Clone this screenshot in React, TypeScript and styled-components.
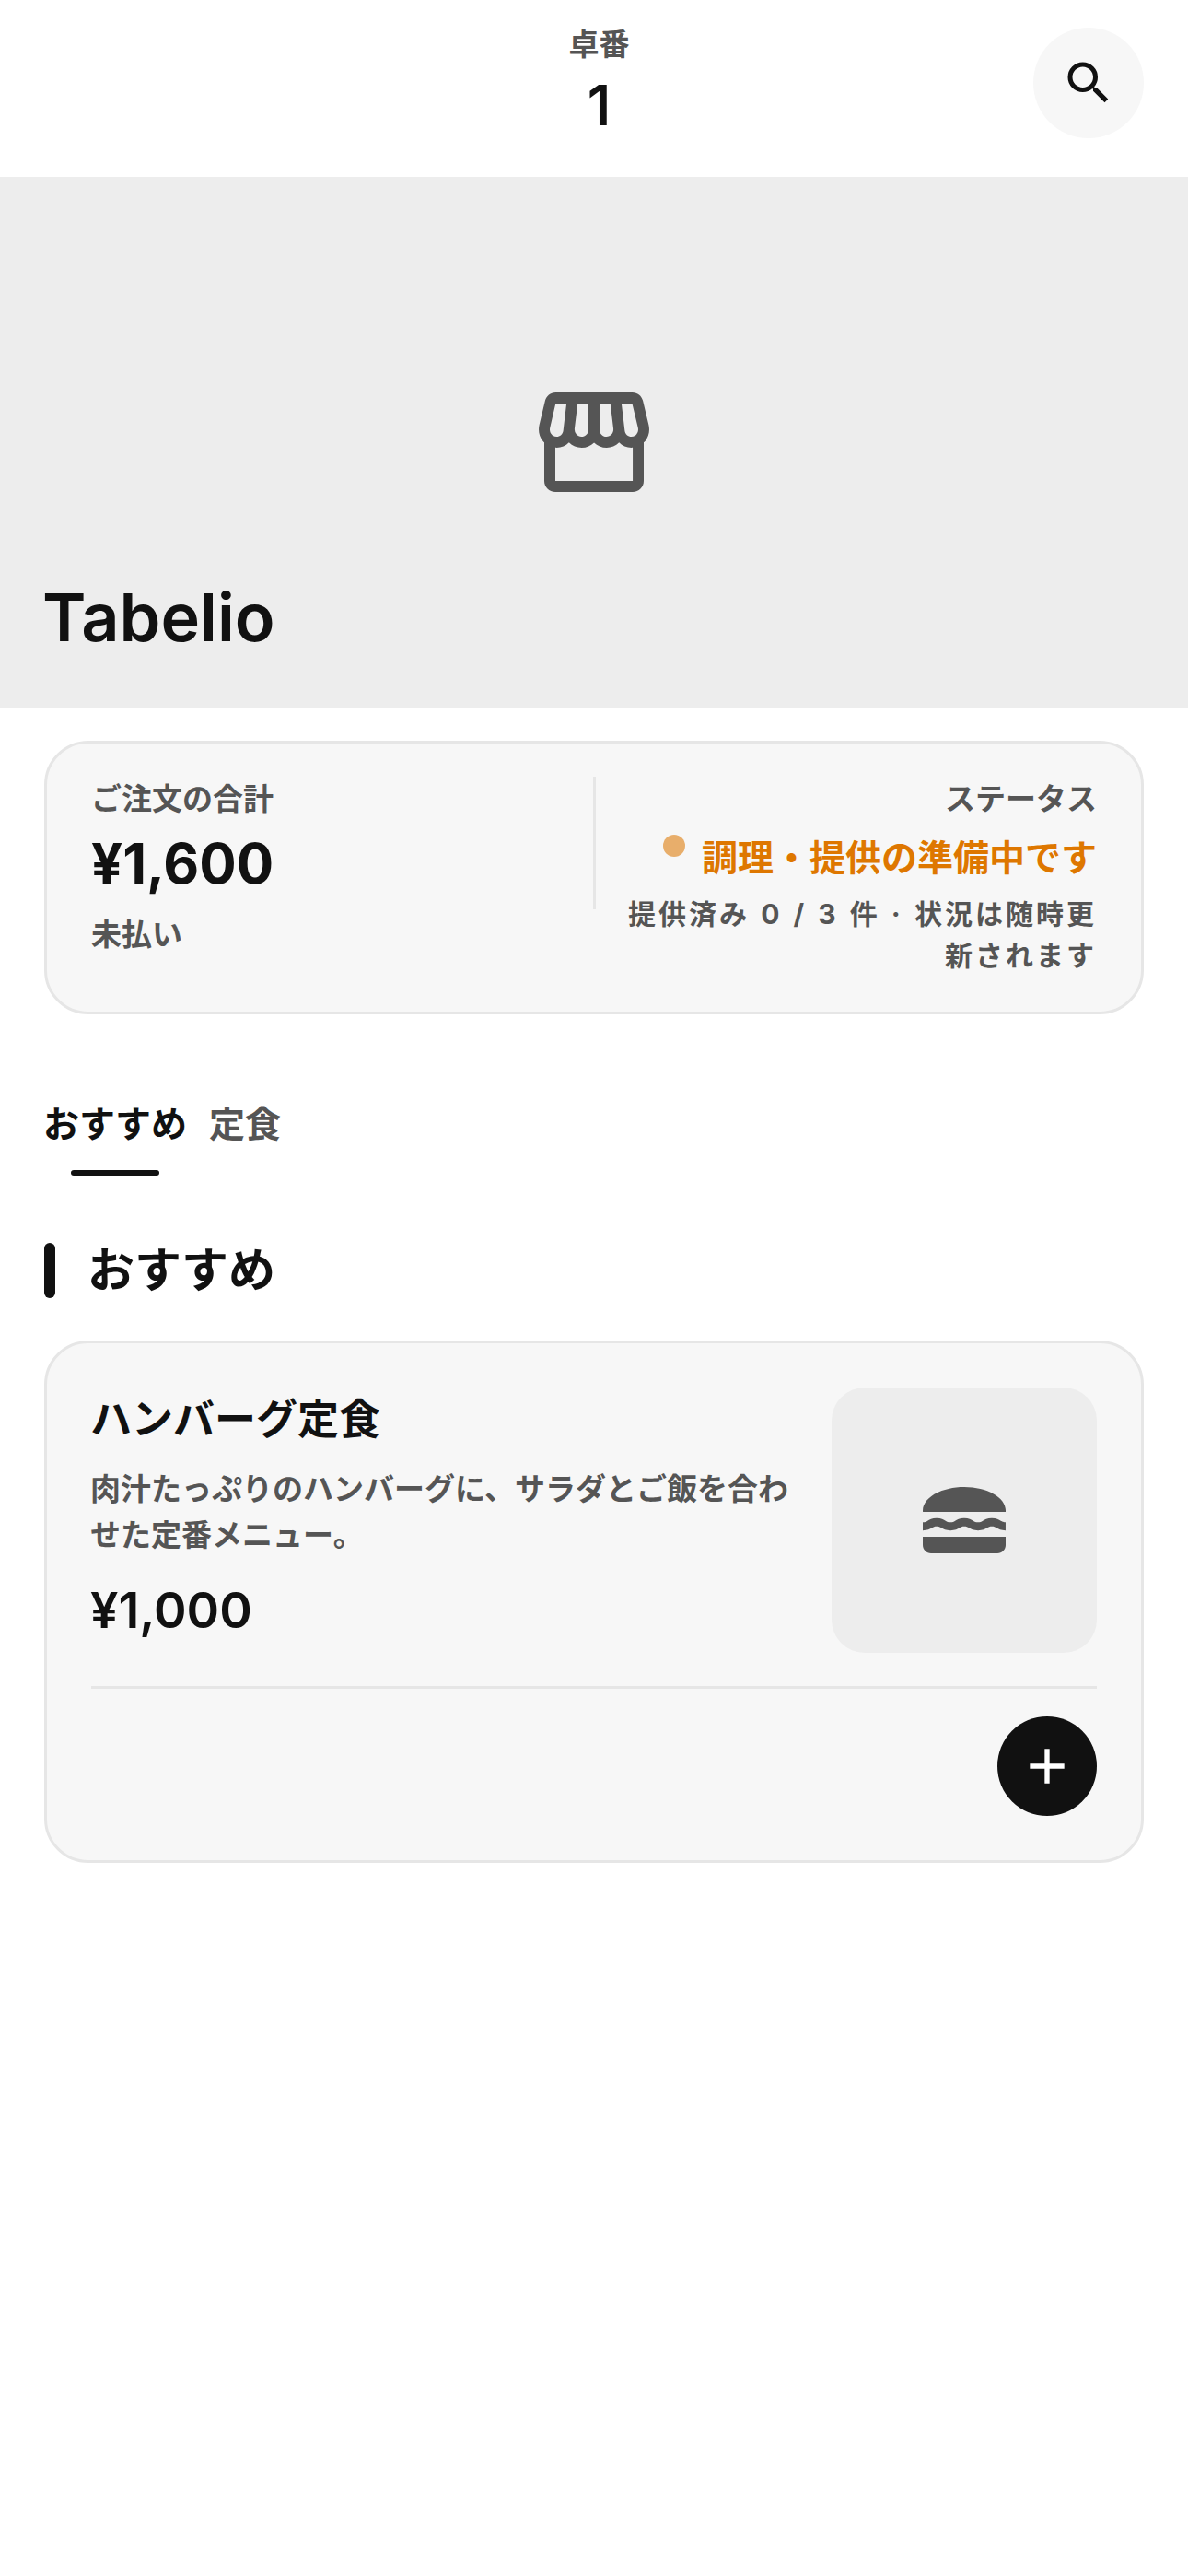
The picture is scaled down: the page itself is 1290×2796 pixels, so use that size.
import React from "react";
import styled, { createGlobalStyle } from "styled-components";
import { MdSearch, MdOutlineStorefront, MdLunchDining, MdAdd } from "react-icons/md";

const Global = createGlobalStyle`
  html, body { margin: 0; padding: 0; background: #fff; }
  body { font-family: Inter, "Noto Sans CJK JP", sans-serif; color: #111; }
  * { box-sizing: border-box; }
`;

const Page = styled.div`
  width: 1290px;
  min-height: 2796px;
  background: #fff;
`;

const Header = styled.header`
  display: grid;
  grid-template-columns: 1fr auto 1fr;
  height: 192px;
  padding: 30px 48px 42px;
`;

const TableInfo = styled.div`
  grid-column: 2;
  display: flex;
  flex-direction: column;
  align-items: center;
  padding-left: 11px;
`;

const TableLabel = styled.div`
  font-size: 33px;
  line-height: 36px;
  font-weight: 700;
  color: #555;
`;

const TableNumber = styled.div`
  font-size: 60px;
  line-height: 72px;
  font-weight: 600;
  margin-top: 12px;
`;

const SearchButton = styled.button`
  grid-column: 3;
  justify-self: end;
  width: 120px;
  height: 120px;
  border: 0;
  border-radius: 50%;
  background: #f7f7f7;
  color: #111;
  display: flex;
  align-items: center;
  justify-content: center;
  padding: 0;
`;

const Hero = styled.section`
  position: relative;
  height: 576px;
  background: #ededed;
  color: #555;
  display: flex;
  align-items: center;
  justify-content: center;
`;

const StoreName = styled.h1`
  position: absolute;
  left: 46px;
  bottom: 56px;
  margin: 0;
  font-size: 72px;
  line-height: 84px;
  font-weight: 600;
  color: #111;
`;

const Content = styled.main`
  padding: 36px 48px 0;
`;

const Card = styled.div`
  background: #f7f7f7;
  border: 3px solid #e6e6e6;
  border-radius: 48px;
`;

const SummaryCard = styled(Card)`
  display: grid;
  grid-template-columns: 1fr 3px 1fr;
  column-gap: 24px;
  padding: 36px 48px;
  height: 297px;
`;

const SummaryLeft = styled.div`
  display: flex;
  flex-direction: column;
  align-items: flex-start;
`;

const SummaryDivider = styled.div`
  width: 3px;
  height: 144px;
  background: #e6e6e6;
`;

const SummaryRight = styled.div`
  display: flex;
  flex-direction: column;
  align-items: flex-end;
  text-align: right;
`;

const MutedLabel = styled.div`
  font-size: 33px;
  line-height: 48px;
  font-weight: 700;
  color: #555;
`;

const TotalPrice = styled.div`
  font-size: 60px;
  line-height: 72px;
  font-weight: 700;
  margin-top: 10px;
`;

const PayStatus = styled(MutedLabel)`
  margin-top: 17px;
`;

const StatusRow = styled.div`
  display: flex;
  align-items: flex-start;
  gap: 18px;
  margin-top: 13px;
`;

const StatusDot = styled.span`
  width: 24px;
  height: 24px;
  margin-top: 2px;
  border-radius: 50%;
  background: #e8ae6b;
`;

const StatusText = styled.div`
  font-size: 39px;
  line-height: 54px;
  font-weight: 700;
  color: #de7700;
`;

const StatusNote = styled.div`
  margin-top: 12px;
  font-size: 30px;
  line-height: 45px;
  font-weight: 700;
  letter-spacing: 3px;
  word-spacing: 2px;
  color: #555;
`;

const Tabs = styled.nav`
  display: flex;
  gap: 24px;
  margin-top: 92px;
  margin-left: -1px;
`;

const Tab = styled.div<{ $active?: boolean }>`
  position: relative;
  font-size: 39px;
  line-height: 54px;
  font-weight: 700;
  padding-bottom: 29px;
  color: ${(p) => (p.$active ? "#111" : "#555")};
`;

const TabLine = styled.span`
  position: absolute;
  left: 30px;
  bottom: 0;
  width: 96px;
  height: 6px;
  border-radius: 3px;
  background: #111;
`;

const SectionHeading = styled.div`
  display: flex;
  align-items: center;
  gap: 35px;
  margin-top: 73px;
`;

const SectionBar = styled.span`
  width: 12px;
  height: 60px;
  border-radius: 6px;
  background: #111;
`;

const SectionTitle = styled.h2`
  margin: 0;
  font-size: 51px;
  line-height: 60px;
  font-weight: 700;
`;

const MenuCard = styled(Card)`
  margin-top: 46px;
  padding: 48px;
`;

const MenuTop = styled.div`
  display: flex;
  justify-content: space-between;
  gap: 36px;
`;

const MenuInfo = styled.div`
  flex: 1;
  min-width: 0;
  padding-top: 5px;
  margin-left: -1px;
`;

const MenuName = styled.h3`
  margin: 0;
  font-size: 45px;
  line-height: 60px;
  font-weight: 700;
`;

const MenuDesc = styled.p`
  margin: 21px 0 0;
  font-size: 33px;
  line-height: 49.5px;
  font-weight: 700;
  color: #555;
`;

const MenuPrice = styled.div`
  margin-top: 24px;
  font-size: 54px;
  line-height: 66px;
  font-weight: 600;
`;

const MenuThumb = styled.div`
  flex: none;
  width: 288px;
  height: 288px;
  border-radius: 36px;
  background: #ededed;
  color: #555;
  display: flex;
  align-items: center;
  justify-content: center;
`;

const MenuFooter = styled.div`
  margin-top: 36px;
  padding-top: 30px;
  border-top: 3px solid #e6e6e6;
  display: flex;
  justify-content: flex-end;
`;

const AddButton = styled.button`
  width: 108px;
  height: 108px;
  padding: 0;
  border: 0;
  border-radius: 50%;
  background: #111;
  color: #fff;
  display: flex;
  align-items: center;
  justify-content: center;
`;

export default function App() {
  return (
    <Page>
      <Global />
      <Header>
        <TableInfo>
          <TableLabel>卓番</TableLabel>
          <TableNumber>1</TableNumber>
        </TableInfo>
        <SearchButton aria-label="検索">
          <MdSearch size={60} />
        </SearchButton>
      </Header>
      <Hero>
        <MdOutlineStorefront size={144} />
        <StoreName>Tabelio</StoreName>
      </Hero>
      <Content>
        <SummaryCard>
          <SummaryLeft>
            <MutedLabel>ご注文の合計</MutedLabel>
            <TotalPrice>¥1,600</TotalPrice>
            <PayStatus>未払い</PayStatus>
          </SummaryLeft>
          <SummaryDivider />
          <SummaryRight>
            <MutedLabel>ステータス</MutedLabel>
            <StatusRow>
              <StatusDot />
              <StatusText>調理・提供の準備中です</StatusText>
            </StatusRow>
            <StatusNote>提供済み 0 / 3 件 · 状況は随時更新されます</StatusNote>
          </SummaryRight>
        </SummaryCard>
        <Tabs>
          <Tab $active>
            おすすめ
            <TabLine />
          </Tab>
          <Tab>定食</Tab>
        </Tabs>
        <SectionHeading>
          <SectionBar />
          <SectionTitle>おすすめ</SectionTitle>
        </SectionHeading>
        <MenuCard>
          <MenuTop>
            <MenuInfo>
              <MenuName>ハンバーグ定食</MenuName>
              <MenuDesc>肉汁たっぷりのハンバーグに、サラダとご飯を合わせた定番メニュー。</MenuDesc>
              <MenuPrice>¥1,000</MenuPrice>
            </MenuInfo>
            <MenuThumb>
              <MdLunchDining size={108} />
            </MenuThumb>
          </MenuTop>
          <MenuFooter>
            <AddButton aria-label="追加">
              <MdAdd size={64} />
            </AddButton>
          </MenuFooter>
        </MenuCard>
      </Content>
    </Page>
  );
}
